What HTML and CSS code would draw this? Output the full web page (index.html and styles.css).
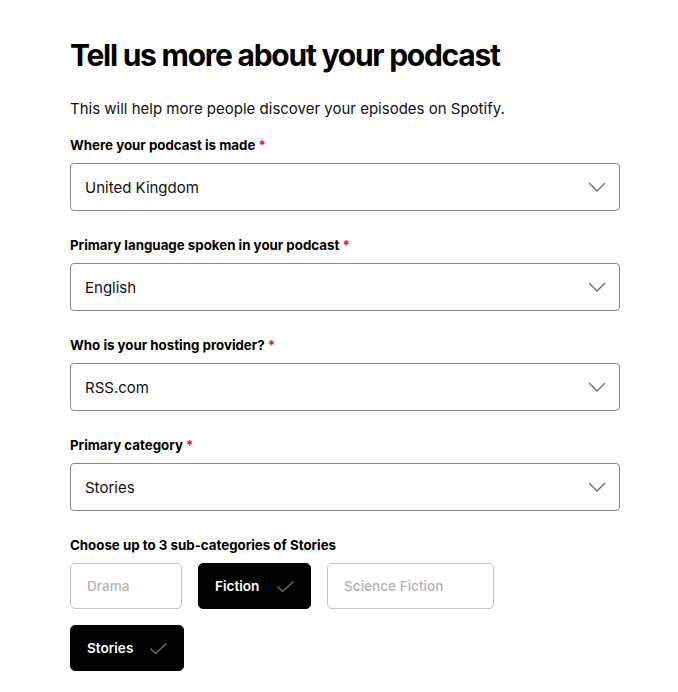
FILE: index.html
```html
<!DOCTYPE html>
<html>
<head>
<meta charset="utf-8">
<link rel="stylesheet" href="styles.css">
</head>
<body>
<main class="page">
  <h1 class="title">Tell us more about your podcast</h1>
  <p class="intro">This will help more people discover your episodes on Spotify.</p>

  <div class="field">
    <label class="label">Where your podcast is made <span class="req">*</span></label>
    <div class="select"><span>United Kingdom</span>
      <svg class="chev" width="18" height="10" viewBox="0 0 18 10"><path d="M1 1l8 8 8-8" fill="none" stroke="#6a6a6a" stroke-width="1.3"/></svg>
    </div>
  </div>

  <div class="field">
    <label class="label">Primary language spoken in your podcast <span class="req">*</span></label>
    <div class="select"><span>English</span>
      <svg class="chev" width="18" height="10" viewBox="0 0 18 10"><path d="M1 1l8 8 8-8" fill="none" stroke="#6a6a6a" stroke-width="1.3"/></svg>
    </div>
  </div>

  <div class="field">
    <label class="label">Who is your hosting provider? <span class="req">*</span></label>
    <div class="select"><span>RSS.com</span>
      <svg class="chev" width="18" height="10" viewBox="0 0 18 10"><path d="M1 1l8 8 8-8" fill="none" stroke="#6a6a6a" stroke-width="1.3"/></svg>
    </div>
  </div>

  <div class="field">
    <label class="label">Primary category <span class="req">*</span></label>
    <div class="select"><span>Stories</span>
      <svg class="chev" width="18" height="10" viewBox="0 0 18 10"><path d="M1 1l8 8 8-8" fill="none" stroke="#6a6a6a" stroke-width="1.3"/></svg>
    </div>
  </div>

  <div class="field">
    <label class="label">Choose up to 3 sub-categories of Stories</label>
    <div class="chips">
      <div class="chip chip-drama">Drama</div>
      <div class="chip chip-fiction on">Fiction
        <svg class="check" width="17" height="11" viewBox="0 0 17 11"><path d="M0.5 5.5l5 5L16.5 0.5" fill="none" stroke="#6e6e6e" stroke-width="1.4"/></svg>
      </div>
      <div class="chip chip-sf">Science Fiction</div>
      <div class="chip chip-stories on">Stories
        <svg class="check" width="17" height="11" viewBox="0 0 17 11"><path d="M0.5 5.5l5 5L16.5 0.5" fill="none" stroke="#6e6e6e" stroke-width="1.4"/></svg>
      </div>
    </div>
  </div>
</main>
</body>
</html>
```

FILE: styles.css
```css
* { box-sizing: border-box; }
html, body { margin: 0; padding: 0; background: #fff; }
body { font-family: "Inter", "Liberation Sans", sans-serif; color: #000; }
.page { width: 550px; margin-left: 70px; padding-top: 37px; }
.title { margin: 0; font-size: 30px; font-weight: 700; letter-spacing: -1.25px; line-height: 36px; }
.intro { margin: 26px 0 0; font-size: 15px; line-height: 20px; color: #111; }
.field { margin-top: 17px; }
.field + .field { margin-top: 25px; }
.label { display: block; font-size: 13.3px; font-weight: 700; line-height: 18px; margin-bottom: 9px; }
.req { color: #e22134; }
.select { height: 48px; border: 1px solid #878787; border-radius: 4px; display: flex; align-items: center; justify-content: space-between; padding: 0 13px 0 14px; font-size: 15px; color: #111; }
.chips { display: flex; flex-wrap: wrap; gap: 16px; }
.chip { height: 46px; border: 1px solid #c4c4c4; border-radius: 5px; display: flex; align-items: center; padding: 0 16px; font-size: 13.6px; font-weight: 500; color: #b3b3b3; }
.chip.on { background: #000; border-color: #000; color: #fff; justify-content: space-between; font-weight: 600; }
.chip-drama { width: 112px; }
.chip-fiction { width: 113px; }
.chip-sf { width: 167px; }
.chip-stories { width: 114px; }
```
